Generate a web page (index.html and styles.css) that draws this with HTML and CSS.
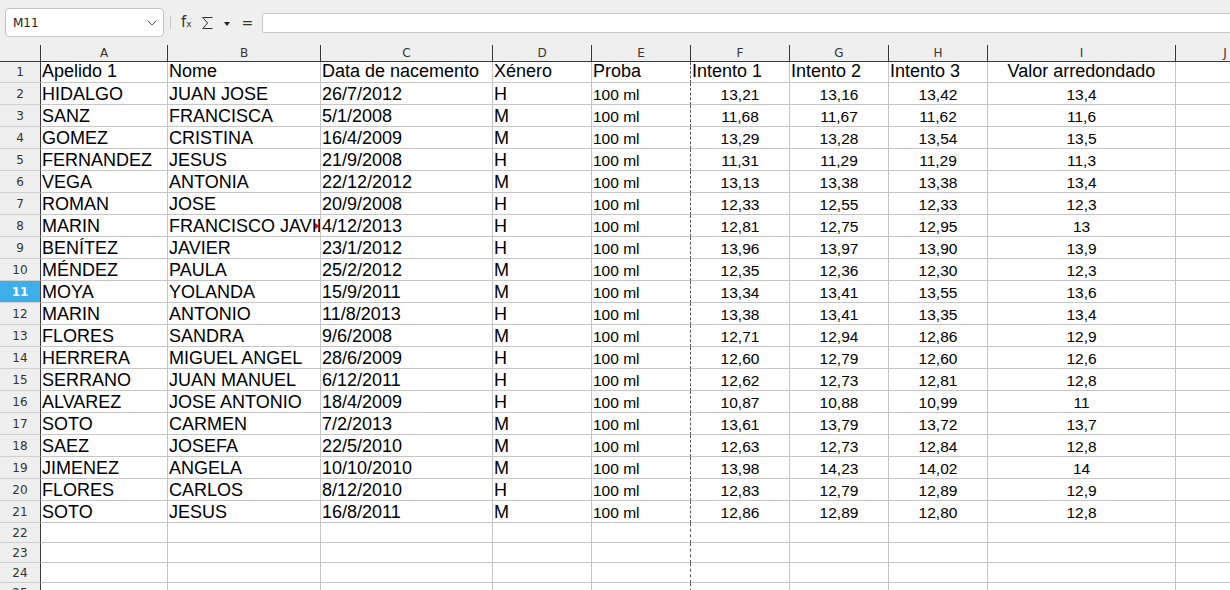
FILE: index.html
```html
<!DOCTYPE html>
<html lang="gl">
<head>
<meta charset="utf-8">
<title>Folla de cálculo</title>
<link rel="stylesheet" href="styles.css">
</head>
<body>
<div class="toolbar">
  <div class="namebox"><span class="nb-text">M11</span>
    <svg class="chev" width="10" height="6" viewBox="0 0 10 6"><polyline points="0.5,0.5 5,5 9.5,0.5" fill="none" stroke="#555" stroke-width="1"/></svg>
  </div>
  <div class="sep"></div>
  <span class="fx">f<span class="fxs">x</span></span>
  <svg class="sigma" width="11" height="12" viewBox="0 0 11 12"><path d="M10.5 0.5 H0.8 L5.6 6 L0.8 11.5 H10.5" fill="none" stroke="#333" stroke-width="1"/></svg>
  <svg class="drop" width="6" height="4" viewBox="0 0 6 4"><polygon points="0,0 6,0 3,4" fill="#222"/></svg>
  <span class="eq">=</span>
  <div class="formula"></div>
</div>
<div class="sheet">
  <div class="row hdr"><div class="corner"></div><div class="ch">A</div><div class="ch">B</div><div class="ch">C</div><div class="ch">D</div><div class="ch">E</div><div class="ch">F</div><div class="ch">G</div><div class="ch">H</div><div class="ch">I</div><div class="ch">J</div></div>
  <div class="row r1"><div class="rh">1</div><div class="c">Apelido 1</div><div class="c">Nome</div><div class="c">Data de nacemento</div><div class="c">Xénero</div><div class="c pb">Proba</div><div class="c">Intento 1</div><div class="c">Intento 2</div><div class="c">Intento 3</div><div class="c n">Valor arredondado</div><div class="c"></div></div>
  <div class="row"><div class="rh">2</div><div class="c">HIDALGO</div><div class="c">JUAN JOSE</div><div class="c">26/7/2012</div><div class="c">H</div><div class="c s pb">100 ml</div><div class="c s n">13,21</div><div class="c s n">13,16</div><div class="c s n">13,42</div><div class="c s n">13,4</div><div class="c"></div></div>
  <div class="row"><div class="rh">3</div><div class="c">SANZ</div><div class="c">FRANCISCA</div><div class="c">5/1/2008</div><div class="c">M</div><div class="c s pb">100 ml</div><div class="c s n">11,68</div><div class="c s n">11,67</div><div class="c s n">11,62</div><div class="c s n">11,6</div><div class="c"></div></div>
  <div class="row"><div class="rh">4</div><div class="c">GOMEZ</div><div class="c">CRISTINA</div><div class="c">16/4/2009</div><div class="c">M</div><div class="c s pb">100 ml</div><div class="c s n">13,29</div><div class="c s n">13,28</div><div class="c s n">13,54</div><div class="c s n">13,5</div><div class="c"></div></div>
  <div class="row"><div class="rh">5</div><div class="c">FERNANDEZ</div><div class="c">JESUS</div><div class="c">21/9/2008</div><div class="c">H</div><div class="c s pb">100 ml</div><div class="c s n">11,31</div><div class="c s n">11,29</div><div class="c s n">11,29</div><div class="c s n">11,3</div><div class="c"></div></div>
  <div class="row"><div class="rh">6</div><div class="c">VEGA</div><div class="c">ANTONIA</div><div class="c">22/12/2012</div><div class="c">M</div><div class="c s pb">100 ml</div><div class="c s n">13,13</div><div class="c s n">13,38</div><div class="c s n">13,38</div><div class="c s n">13,4</div><div class="c"></div></div>
  <div class="row"><div class="rh">7</div><div class="c">ROMAN</div><div class="c">JOSE</div><div class="c">20/9/2008</div><div class="c">H</div><div class="c s pb">100 ml</div><div class="c s n">12,33</div><div class="c s n">12,55</div><div class="c s n">12,33</div><div class="c s n">12,3</div><div class="c"></div></div>
  <div class="row"><div class="rh">8</div><div class="c">MARIN</div><div class="c clip">FRANCISCO JAVIER<span class="more"></span></div><div class="c">4/12/2013</div><div class="c">H</div><div class="c s pb">100 ml</div><div class="c s n">12,81</div><div class="c s n">12,75</div><div class="c s n">12,95</div><div class="c s n">13</div><div class="c"></div></div>
  <div class="row"><div class="rh">9</div><div class="c">BENÍTEZ</div><div class="c">JAVIER</div><div class="c">23/1/2012</div><div class="c">H</div><div class="c s pb">100 ml</div><div class="c s n">13,96</div><div class="c s n">13,97</div><div class="c s n">13,90</div><div class="c s n">13,9</div><div class="c"></div></div>
  <div class="row"><div class="rh">10</div><div class="c">MÉNDEZ</div><div class="c">PAULA</div><div class="c">25/2/2012</div><div class="c">M</div><div class="c s pb">100 ml</div><div class="c s n">12,35</div><div class="c s n">12,36</div><div class="c s n">12,30</div><div class="c s n">12,3</div><div class="c"></div></div>
  <div class="row"><div class="rh sel">11</div><div class="c">MOYA</div><div class="c">YOLANDA</div><div class="c">15/9/2011</div><div class="c">M</div><div class="c s pb">100 ml</div><div class="c s n">13,34</div><div class="c s n">13,41</div><div class="c s n">13,55</div><div class="c s n">13,6</div><div class="c"></div></div>
  <div class="row"><div class="rh">12</div><div class="c">MARIN</div><div class="c">ANTONIO</div><div class="c">11/8/2013</div><div class="c">H</div><div class="c s pb">100 ml</div><div class="c s n">13,38</div><div class="c s n">13,41</div><div class="c s n">13,35</div><div class="c s n">13,4</div><div class="c"></div></div>
  <div class="row"><div class="rh">13</div><div class="c">FLORES</div><div class="c">SANDRA</div><div class="c">9/6/2008</div><div class="c">M</div><div class="c s pb">100 ml</div><div class="c s n">12,71</div><div class="c s n">12,94</div><div class="c s n">12,86</div><div class="c s n">12,9</div><div class="c"></div></div>
  <div class="row"><div class="rh">14</div><div class="c">HERRERA</div><div class="c">MIGUEL ANGEL</div><div class="c">28/6/2009</div><div class="c">H</div><div class="c s pb">100 ml</div><div class="c s n">12,60</div><div class="c s n">12,79</div><div class="c s n">12,60</div><div class="c s n">12,6</div><div class="c"></div></div>
  <div class="row"><div class="rh">15</div><div class="c">SERRANO</div><div class="c">JUAN MANUEL</div><div class="c">6/12/2011</div><div class="c">H</div><div class="c s pb">100 ml</div><div class="c s n">12,62</div><div class="c s n">12,73</div><div class="c s n">12,81</div><div class="c s n">12,8</div><div class="c"></div></div>
  <div class="row"><div class="rh">16</div><div class="c">ALVAREZ</div><div class="c">JOSE ANTONIO</div><div class="c">18/4/2009</div><div class="c">H</div><div class="c s pb">100 ml</div><div class="c s n">10,87</div><div class="c s n">10,88</div><div class="c s n">10,99</div><div class="c s n">11</div><div class="c"></div></div>
  <div class="row"><div class="rh">17</div><div class="c">SOTO</div><div class="c">CARMEN</div><div class="c">7/2/2013</div><div class="c">M</div><div class="c s pb">100 ml</div><div class="c s n">13,61</div><div class="c s n">13,79</div><div class="c s n">13,72</div><div class="c s n">13,7</div><div class="c"></div></div>
  <div class="row"><div class="rh">18</div><div class="c">SAEZ</div><div class="c">JOSEFA</div><div class="c">22/5/2010</div><div class="c">M</div><div class="c s pb">100 ml</div><div class="c s n">12,63</div><div class="c s n">12,73</div><div class="c s n">12,84</div><div class="c s n">12,8</div><div class="c"></div></div>
  <div class="row"><div class="rh">19</div><div class="c">JIMENEZ</div><div class="c">ANGELA</div><div class="c">10/10/2010</div><div class="c">M</div><div class="c s pb">100 ml</div><div class="c s n">13,98</div><div class="c s n">14,23</div><div class="c s n">14,02</div><div class="c s n">14</div><div class="c"></div></div>
  <div class="row"><div class="rh">20</div><div class="c">FLORES</div><div class="c">CARLOS</div><div class="c">8/12/2010</div><div class="c">H</div><div class="c s pb">100 ml</div><div class="c s n">12,83</div><div class="c s n">12,79</div><div class="c s n">12,89</div><div class="c s n">12,9</div><div class="c"></div></div>
  <div class="row"><div class="rh">21</div><div class="c">SOTO</div><div class="c">JESUS</div><div class="c">16/8/2011</div><div class="c">M</div><div class="c s pb">100 ml</div><div class="c s n">12,86</div><div class="c s n">12,89</div><div class="c s n">12,80</div><div class="c s n">12,8</div><div class="c"></div></div>
  <div class="row re"><div class="rh">22</div><div class="c"></div><div class="c"></div><div class="c"></div><div class="c"></div><div class="c pb"></div><div class="c"></div><div class="c"></div><div class="c"></div><div class="c"></div><div class="c"></div></div>
  <div class="row re"><div class="rh">23</div><div class="c"></div><div class="c"></div><div class="c"></div><div class="c"></div><div class="c pb"></div><div class="c"></div><div class="c"></div><div class="c"></div><div class="c"></div><div class="c"></div></div>
  <div class="row re"><div class="rh">24</div><div class="c"></div><div class="c"></div><div class="c"></div><div class="c"></div><div class="c pb"></div><div class="c"></div><div class="c"></div><div class="c"></div><div class="c"></div><div class="c"></div></div>
  <div class="row re"><div class="rh">25</div><div class="c"></div><div class="c"></div><div class="c"></div><div class="c"></div><div class="c pb"></div><div class="c"></div><div class="c"></div><div class="c"></div><div class="c"></div><div class="c"></div></div>
</div>
</body>
</html>
```
FILE: styles.css
```css
html, body {
  margin: 0;
  padding: 0;
  width: 1230px;
  height: 590px;
  overflow: hidden;
  background: #ffffff;
}
body {
  font-family: "DejaVu Sans", sans-serif;
  color: #000;
}
.toolbar {
  height: 45px;
  background: #efefef;
  display: flex;
  align-items: center;
  padding-left: 5px;
  box-sizing: border-box;
}
.namebox {
  width: 159px;
  height: 29px;
  box-sizing: border-box;
  background: #fff;
  border: 1px solid #c4c4c4;
  border-radius: 4px;
  display: flex;
  align-items: center;
  justify-content: space-between;
  padding: 0 6px 0 7px;
  flex: none;
}
.nb-text {
  font-size: 12px;
  color: #222;
}
.chev { display: block; margin-top: 1px; }
.sep {
  width: 1px;
  height: 13px;
  background: #c8c8c8;
  margin-left: 6px;
  flex: none;
}
.fx {
  font-size: 15px;
  color: #333;
  margin-left: 10px;
  line-height: 1;
}
.fxs {
  font-size: 9px;
  margin-left: 0;
}
.sigma { display: block; margin-left: 10px; flex: none; }
.drop { display: block; margin-left: 11px; margin-top: 2px; flex: none; }
.eq {
  font-size: 14px;
  color: #333;
  margin-left: 12px;
  line-height: 1;
}
.formula {
  margin-left: 9px;
  height: 20px;
  flex: 1 0 auto;
  min-width: 1000px;
  box-sizing: border-box;
  background: #fff;
  border: 1px solid #c8c8c8;
  border-radius: 2px;
}
.sheet {
  width: 1275px;
}
.row {
  display: grid;
  grid-template-columns: 41px 127px 153px 172px 99px 99px 99px 99px 99px 188px 99px;
  height: 22px;
}
.row.hdr { height: 17px; }
.row.r1 { height: 21px; }
.row.re { height: 20px; }
.corner, .ch {
  background: #efefef;
  box-sizing: border-box;
  border-right: 1px solid #3a3a3a;
  border-bottom: 1px solid #3a3a3a;
}
.ch {
  display: flex;
  align-items: center;
  justify-content: center;
  font-size: 12px;
  color: #333;
}
.rh {
  background: #efefef;
  box-sizing: border-box;
  border-right: 1px solid #3a3a3a;
  border-bottom: 1px solid #d0d0d0;
  display: flex;
  align-items: center;
  justify-content: center;
  font-size: 12px;
  color: #333;
}
.rh.sel {
  background: #3daee9;
  color: #fff;
  font-weight: bold;
}
.c {
  position: relative;
  box-sizing: border-box;
  border-right: 1px solid #c6c6c6;
  border-bottom: 1px solid #c6c6c6;
  display: flex;
  align-items: flex-end;
  padding: 0 1px 0 1px;
  font-family: "Liberation Sans", Arial, sans-serif;
  font-size: 18px;
  line-height: 19px;
  white-space: nowrap;
  overflow: hidden;
}
.r1 .c { line-height: normal; }
.c.s { font-size: 15.5px; line-height: 18px; }
.c.n { justify-content: center; }
.c.pb { border-right: 1px dashed #555; }
.more {
  position: absolute;
  right: 1px;
  top: 50%;
  margin-top: -3px;
  width: 0;
  height: 0;
  border-top: 3px solid transparent;
  border-bottom: 3px solid transparent;
  border-left: 4px solid #e00000;
}
```
